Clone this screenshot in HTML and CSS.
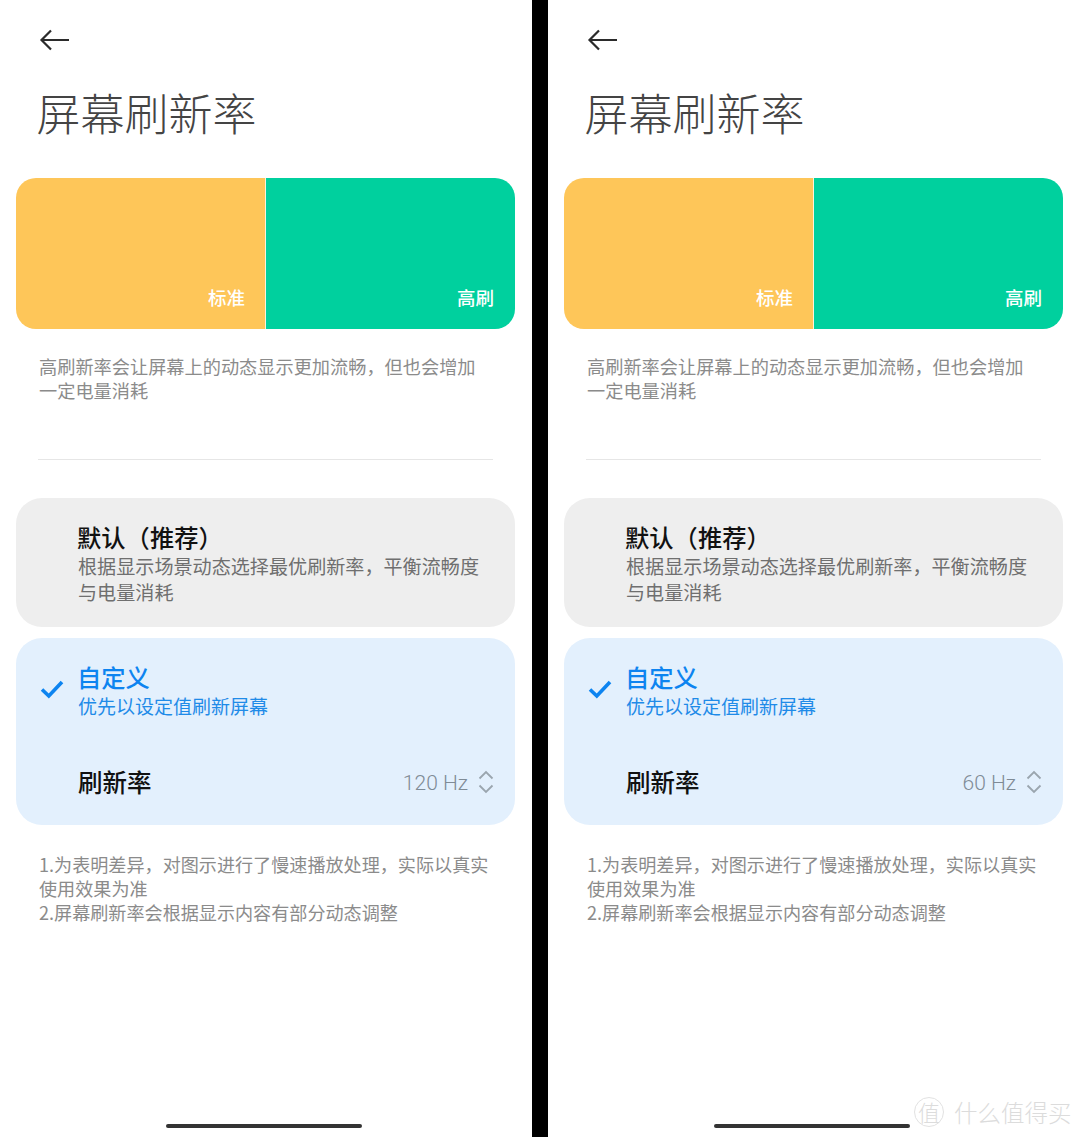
FILE: index.html
```html
<!DOCTYPE html>
<html lang="zh-CN">
<head>
  <meta charset="UTF-8" />
  <meta name="viewport" content="width=device-width, initial-scale=1.0"/>
  <title>屏幕刷新率</title>
  <link rel="stylesheet" href="styles.css">
</head>
<body>
  <div class="page">
    <section class="panel">
      <svg class="back" width="32" height="24" viewBox="0 0 32 24"><path d="M30 12H3M12 2.500 2.500 12l9.500 9.500"/></svg>
      <h1>屏幕刷新率</h1>
      <div class="banner">
        <div class="swatch standard">标准</div>
        <div class="swatch high">高刷</div>
      </div>
      <p class="note">高刷新率会让屏幕上的动态显示更加流畅，但也会增加一定电量消耗</p>
      <hr class="divider">
      <div class="card card-grey">
        <h2>默认（推荐）</h2>
        <p>根据显示场景动态选择最优刷新率，平衡流畅度与电量消耗</p>
      </div>
      <div class="card card-blue">
        <svg class="check" width="24" height="20" viewBox="0 0 24 20"><path d="M2 10.500 8.800 17 22 3"/></svg>
        <h2>自定义</h2>
        <p>优先以设定值刷新屏幕</p>
        <div class="rate">
          <span class="rate-label">刷新率</span>
          <span class="rate-value">120 Hz</span>
          <svg class="updown" width="16" height="24" viewBox="0 0 16 24"><path d="M1.500 8.500 8 2l6.500 6.500M1.500 15.500 8 22l6.500-6.500"/></svg>
        </div>
      </div>
      <p class="foot">1.为表明差异，对图示进行了慢速播放处理，实际以真实使用效果为准<br>2.屏幕刷新率会根据显示内容有部分动态调整</p>
      <div class="home"></div>
    </section>

    <section class="panel">
      <svg class="back" width="32" height="24" viewBox="0 0 32 24"><path d="M30 12H3M12 2.500 2.500 12l9.500 9.500"/></svg>
      <h1>屏幕刷新率</h1>
      <div class="banner">
        <div class="swatch standard">标准</div>
        <div class="swatch high">高刷</div>
      </div>
      <p class="note">高刷新率会让屏幕上的动态显示更加流畅，但也会增加一定电量消耗</p>
      <hr class="divider">
      <div class="card card-grey">
        <h2>默认（推荐）</h2>
        <p>根据显示场景动态选择最优刷新率，平衡流畅度与电量消耗</p>
      </div>
      <div class="card card-blue">
        <svg class="check" width="24" height="20" viewBox="0 0 24 20"><path d="M2 10.500 8.800 17 22 3"/></svg>
        <h2>自定义</h2>
        <p>优先以设定值刷新屏幕</p>
        <div class="rate">
          <span class="rate-label">刷新率</span>
          <span class="rate-value">60 Hz</span>
          <svg class="updown" width="16" height="24" viewBox="0 0 16 24"><path d="M1.500 8.500 8 2l6.500 6.500M1.500 15.500 8 22l6.500-6.500"/></svg>
        </div>
      </div>
      <p class="foot">1.为表明差异，对图示进行了慢速播放处理，实际以真实使用效果为准<br>2.屏幕刷新率会根据显示内容有部分动态调整</p>
      <div class="home"></div>
    </section>
  </div>

  <div class="watermark">
    <span class="seal">值</span>
    <span>什么值得买</span>
  </div>
</body>
</html>
```

FILE: styles.css
```css
html, body {
  margin: 0;
  padding: 0;
  background-color: #000000;
  font-family: "Noto Sans CJK SC", "Noto Sans", sans-serif;
}

.page {
  display: flex;
  gap: 16px;
  width: 1080px;
  height: 1137px;
  overflow: hidden;
}

.panel {
  width: 532px;
  height: 1137px;
  box-sizing: border-box;
  padding: 28px 17px 0 16px;
  background-color: #ffffff;
  display: flex;
  flex-direction: column;
}

.back {
  display: block;
  margin-left: 23px;
  flex: none;
}

.back path {
  fill: none;
  stroke: #2b2b2b;
  stroke-width: 2.200;
}

h1 {
  margin: 28px 0 0 20.500px;
  font-size: 44px;
  line-height: 64px;
  font-weight: 300;
  color: #444444;
}

.banner {
  display: flex;
  height: 151px;
  margin-top: 34px;
  border-radius: 20px;
  overflow: hidden;
  flex: none;
}

.swatch {
  display: flex;
  align-items: flex-end;
  justify-content: flex-end;
  box-sizing: border-box;
  padding: 0 20px 19px 0;
  color: #ffffff;
  font-size: 18.500px;
  line-height: 26px;
  font-weight: 500;
}

.standard {
  width: 250px;
  background-color: #fec659;
  border-right: 1px solid #fff3d8;
}

.high {
  flex: 1;
  padding-right: 21px;
  background-color: #00d09e;
}

.note, .foot {
  margin: 0;
  font-size: 18.200px;
  line-height: 24px;
  color: #8b8b8b;
}

.note {
  margin: 25px 38px 0 23px;
}

.divider {
  margin: 57px 22px 0 22px;
  border: 0;
  border-top: 1px solid #e6e6e6;
  width: 455px;
  box-sizing: border-box;
}

.card {
  position: relative;
  box-sizing: border-box;
  padding: 23px 30px 0 62px;
  border-radius: 26px;
  flex: none;
}

.card h2 {
  margin: 0 0 0 -1px;
  font-size: 24.300px;
  line-height: 32px;
  font-weight: 500;
}

.card p {
  margin: 0;
  font-size: 19.100px;
  line-height: 26px;
}

.card-grey {
  height: 129px;
  margin-top: 38px;
  background-color: #eeeeee;
}

.card-grey h2 {
  color: #111111;
}

.card-grey p {
  margin-top: 0;
  color: #6f6f6f;
}

.card-blue {
  height: 187px;
  margin-top: 11px;
  background-color: #e3f0fd;
}

.card-blue h2 {
  color: #0d84f0;
}

.card-blue p {
  margin-top: 0;
  font-size: 19px;
  color: #1f8be8;
}

.check {
  position: absolute;
  left: 24px;
  top: 41px;
}

.check path {
  fill: none;
  stroke: #0d84f0;
  stroke-width: 3.600;
}

.rate {
  display: flex;
  align-items: center;
  margin-top: 47px;
  height: 32px;
}

.rate-label {
  flex: 1;
  font-size: 24.500px;
  line-height: 32px;
  font-weight: 500;
  color: #111111;
}

.rate-value {
  font-family: "Roboto", "Noto Sans", sans-serif;
  font-size: 21px;
  font-weight: 300;
  color: #7f8b96;
  margin-right: 10px;
  position: relative;
  top: 1px;
}

.updown {
  margin-right: -9px;
}

.updown path {
  fill: none;
  stroke: #9aa5ae;
  stroke-width: 1.800;
}

.foot {
  margin: 27px 21px 0 23px;
  font-size: 18.100px;
}

.home {
  width: 196px;
  height: 4px;
  margin: auto 0 9px 150px;
  border-radius: 2px;
  background-color: #333333;
}

.watermark {
  position: absolute;
  left: 914px;
  top: 1096px;
  display: flex;
  align-items: center;
  gap: 10px;
  font-size: 23.500px;
  line-height: 32px;
  font-weight: 300;
  color: #dcdcdc;
}

.seal {
  width: 28px;
  height: 28px;
  border: 1px solid #e2e2e2;
  border-radius: 50%;
  font-size: 22px;
  line-height: 26px;
  text-align: center;
}
```
